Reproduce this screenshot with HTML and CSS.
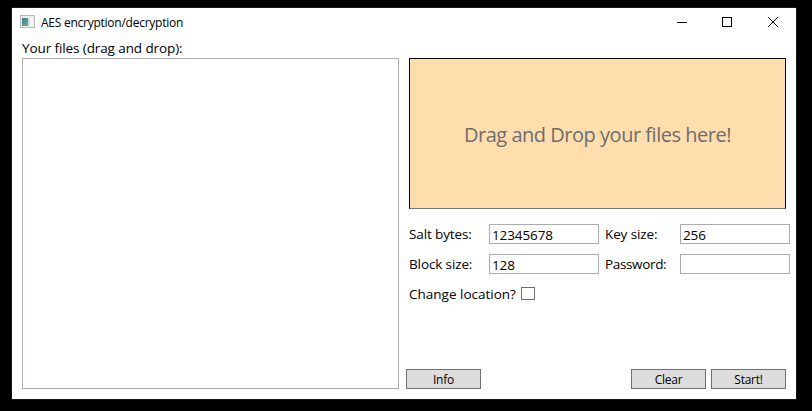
FILE: index.html
```html
<!DOCTYPE html>
<html lang="en">
<head>
<meta charset="utf-8">
<title>AES encryption/decryption</title>
<link rel="stylesheet" href="styles.css">
</head>
<body>
<main class="window">
  <header class="titlebar">
    <svg class="app-icon" width="16" height="14" viewBox="0 0 16 14">
      <defs><linearGradient id="pane" x1="0" y1="0" x2="1" y2="1"><stop offset="0" stop-color="#4a74a8"/><stop offset="1" stop-color="#5cb878"/></linearGradient></defs>
      <rect x=".5" y=".5" width="14" height="12" fill="#eceeef" stroke="#b9bdc3"/>
      <rect x="2" y="3" width="6" height="8" fill="url(#pane)"/>
      <rect x="8" y="3" width="2" height="8" fill="#cfe3dc"/>
      <rect x="11" y="3" width="2" height="8" fill="#f8f9f9"/>
    </svg>
    <h1 class="title">AES encryption/decryption</h1>
    <div class="controls">
      <svg width="46" height="30" viewBox="0 0 46 30"><path d="M18 14.5h10" class="line"/></svg>
      <svg width="46" height="30" viewBox="0 0 46 30"><rect x="17.5" y="9.5" width="9" height="9" class="line"/></svg>
      <svg width="46" height="30" viewBox="0 0 46 30"><path d="M17.2 9.2l9.6 9.6M26.8 9.2l-9.6 9.6" class="line"/></svg>
    </div>
  </header>
  <div class="content">
    <section class="files">
      <h2 class="files-label">Your files (drag and drop):</h2>
      <div class="file-list"></div>
    </section>
    <section class="options">
      <div class="drop"><span class="drop-text">Drag and Drop your files here!</span></div>
      <div class="form">
        <label class="salt" for="salt">Salt bytes:</label><input id="salt" value="12345678">
        <label class="key" for="key">Key size:</label><input id="key" value="256">
        <label class="block" for="block">Block size:</label><input id="block" value="128">
        <label class="password" for="password">Password:</label><input id="password" type="password">
      </div>
      <div class="location"><label class="location-label" for="location">Change location?</label><input id="location" class="check" type="checkbox"></div>
      <div class="actions">
        <button class="info">Info</button>
        <button>Clear</button>
        <button>Start!</button>
      </div>
    </section>
  </div>
</main>
</body>
</html>
```
FILE: styles.css
```css
* { box-sizing: border-box; }
body {
  margin: 0;
  height: 411px;
  padding: 8px 16px 12px 12px;
  background: #000;
  color: #000;
  font: 13.5px/20px "Open Sans", "Noto Sans", sans-serif;
  overflow: hidden;
}
h1, h2 { margin: 0; font-weight: 400; white-space: nowrap; }
.window { width: 784px; height: 391px; background: #fff; box-shadow: 0 0 0 1px #161616; }
.titlebar { display: flex; height: 30px; padding-left: 8px; }
.app-icon { margin-top: 7px; }
.title { margin: 5px 0 0 5px; font-size: 12px; line-height: 20px; letter-spacing: -0.25px; }
.controls { display: flex; margin: 0 -1px 0 auto; }
.line { fill: none; stroke: #000; stroke-width: 1; }
.content { display: flex; gap: 10px; height: 361px; padding: 0 10px 10px; }
.files { display: flex; flex-direction: column; width: 377px; }
.files-label { height: 20px; font-size: 13.5px; line-height: 20px; letter-spacing: -0.1px; }
.file-list { flex: 1; border: 1px solid #abadb3; }
.options { display: flex; flex-direction: column; width: 377px; padding-top: 20px; }
.drop {
  display: flex;
  align-items: center;
  justify-content: center;
  height: 151px;
  padding-top: 2px;
  border: 1px solid #000;
  border-bottom-color: #777;
  background: #ffdead;
  color: #6d6d6d;
  font-size: 20px;
}
.drop-text { white-space: nowrap; letter-spacing: -0.48px; }
.form {
  display: grid;
  grid-template-columns: 80px 116px 75px 110px;
  grid-auto-rows: 20px;
  row-gap: 10px;
  width: 381px;
  margin-top: 15px;
}
label { white-space: nowrap; letter-spacing: -0.12px; }
.password { letter-spacing: -0.35px; }
.form input {
  width: 110px;
  height: 20px;
  margin: 0;
  padding: 1px 2px 0;
  border: 1px solid #abadb3;
  background: #fff;
  color: #000;
  font: inherit;
  letter-spacing: -0.1px;
  line-height: 17px;
}
.location { display: flex; height: 20px; margin-top: 10px; }
.location-label { width: 112px; letter-spacing: 0; }
.check {
  appearance: none;
  width: 14px;
  height: 13px;
  margin: 3px 0 0;
  border: 1px solid #707070;
  background: #fff;
}
.actions { display: flex; gap: 5px; margin: auto 0 0 -3px; }
button {
  width: 75px;
  height: 20px;
  padding: 1px 0 0;
  border: 1px solid #707070;
  background: #ddd;
  color: #000;
  font: 12px/18px "Open Sans", "Noto Sans", sans-serif;
  letter-spacing: -0.25px;
}
.info { margin-right: auto; }
```
